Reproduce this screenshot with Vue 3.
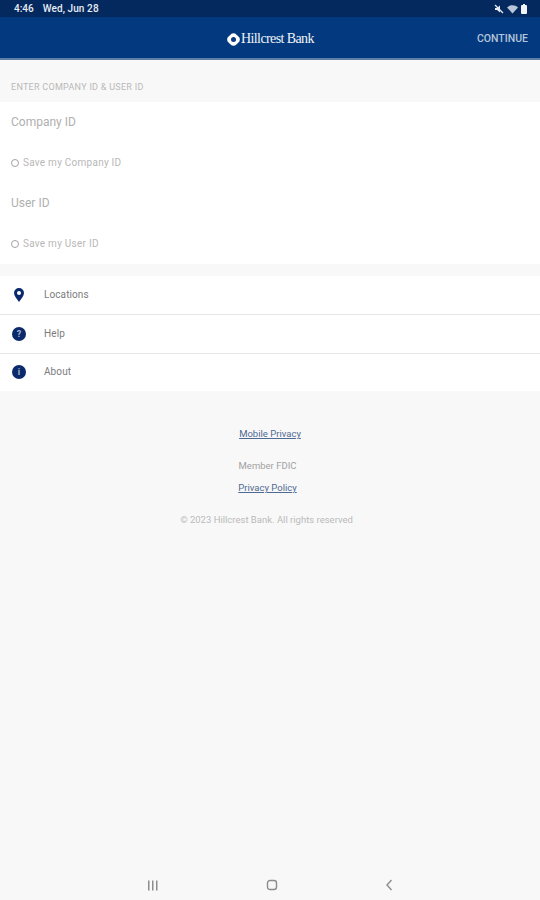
<script setup>
const menuItems = [
  { label: "Locations", icon: "pin" },
  { label: "Help", icon: "help" },
  { label: "About", icon: "info" },
];
</script>

<template>
  <div class="screen">
    <div class="status-bar">
      <span class="status-time">4:46</span>
      <span class="status-date">Wed, Jun 28</span>
      <div class="status-icons">
        <svg width="10" height="10" viewBox="0 0 10 10" fill="#e6ebf3">
          <path d="M1 4h2l3-2.500v7L3 6H1z" />
          <path d="M1 1l8 8" stroke="#e6ebf3" stroke-width="1.200" />
        </svg>
        <svg width="11" height="10" viewBox="0 0 11 10" fill="#b9c5d8">
          <path d="M0 3.500C3 .5 8 .5 11 3.500L5.500 9.500z" />
        </svg>
        <svg width="6" height="10" viewBox="0 0 6 10" fill="#f2f4f8">
          <rect x="0" y="1" width="6" height="9" rx="1" />
          <rect x="2" y="0" width="2" height="1" />
        </svg>
      </div>
    </div>

    <header class="app-bar">
      <div class="logo">
        <svg width="13" height="13" viewBox="0 0 13 13">
          <circle cx="6.500" cy="6.500" r="5.600" fill="#fff" />
          <circle cx="6.500" cy="3.400" r="3.200" fill="#fff" />
          <circle cx="6.500" cy="9.600" r="3.200" fill="#fff" />
          <circle cx="3.400" cy="6.500" r="3.200" fill="#fff" />
          <circle cx="9.600" cy="6.500" r="3.200" fill="#fff" />
          <circle cx="6.500" cy="6.500" r="2.500" fill="#0a3d80" />
        </svg>
        <span class="logo-text">Hillcrest Bank</span>
      </div>
      <span class="continue">CONTINUE</span>
    </header>

    <div class="section-label">ENTER COMPANY ID &amp; USER ID</div>

    <section class="form-card">
      <div class="field">Company ID</div>
      <div class="save-row"><span class="radio"></span>Save my Company ID</div>
      <div class="field">User ID</div>
      <div class="save-row"><span class="radio"></span>Save my User ID</div>
    </section>

    <section class="menu">
      <div v-for="item in menuItems" :key="item.label" class="menu-row">
        <span class="menu-icon">
          <svg v-if="item.icon === 'pin'" width="10" height="14" viewBox="0 0 10 14">
            <path d="M5 0a5 5 0 0 1 5 5c0 3-3 6-5 9-2-3-5-6-5-9a5 5 0 0 1 5-5z" fill="#0b2a6b" />
            <circle cx="5" cy="5" r="2" fill="#fff" />
          </svg>
          <span v-else class="badge">{{ item.icon === "help" ? "?" : "i" }}</span>
        </span>
        <span class="menu-label">{{ item.label }}</span>
      </div>
    </section>

    <footer class="links">
      <a class="link mobile-privacy">Mobile Privacy</a>
      <span class="member">Member FDIC</span>
      <a class="link policy">Privacy Policy</a>
      <span class="copyright">© 2023 Hillcrest Bank. All rights reserved</span>
    </footer>

    <nav class="nav-bar">
      <svg width="12" height="11" viewBox="0 0 12 11" fill="#8d8d8d">
        <rect x="1" y="0.500" width="1.500" height="10" />
        <rect x="5" y="0.500" width="1.500" height="10" />
        <rect x="9" y="0.500" width="1.500" height="10" />
      </svg>
      <svg width="12" height="12" viewBox="0 0 12 12" fill="none" stroke="#8d8d8d" stroke-width="1.400">
        <rect x="1.500" y="1.500" width="9" height="9" rx="2.500" />
      </svg>
      <svg width="8" height="12" viewBox="0 0 8 12" fill="none" stroke="#8d8d8d" stroke-width="1.400">
        <path d="M6.500 1L2 6l4.500 5" />
      </svg>
    </nav>
  </div>
</template>

<style scoped>
.screen {
  width: 540px;
  height: 900px;
  display: flex;
  flex-direction: column;
  background: #f8f8f8;
  font-family: Roboto, "Liberation Sans", sans-serif;
  overflow: hidden;
}

.status-bar {
  height: 17px;
  flex: none;
  display: flex;
  align-items: center;
  padding: 0 13px 0 14px;
  background: #04295f;
  color: #e8ecf3;
  font-size: 10px;
  font-weight: 500;
}

.status-date {
  margin-left: 9px;
  letter-spacing: 0.100px;
}

.status-icons {
  margin-left: auto;
  display: flex;
  align-items: center;
  gap: 3px;
}

.app-bar {
  position: relative;
  height: 41px;
  flex: none;
  display: flex;
  align-items: center;
  justify-content: flex-end;
  padding-right: 12px;
  background: #033a7f;
  border-bottom: 2px solid #5f7fa9;
  box-sizing: content-box;
}

.logo {
  position: absolute;
  left: 227px;
  top: 14px;
  display: flex;
  align-items: center;
  gap: 1px;
}

.logo-text {
  font-family: "Liberation Serif", serif;
  font-size: 14px;
  letter-spacing: -0.600px;
  color: #f1f4f8;
}

.continue {
  margin-top: 2px;
  font-size: 10.500px;
  font-weight: 500;
  color: #b4c4da;
}

.section-label {
  height: 42px;
  flex: none;
  box-sizing: border-box;
  padding: 12px 0 0 11px;
  display: flex;
  align-items: center;
  font-size: 9px;
  letter-spacing: 0.280px;
  color: #b8b8b8;
}

.form-card {
  flex: none;
  height: 162px;
  background: #fff;
  display: flex;
  flex-direction: column;
}

.field {
  height: 40px;
  display: flex;
  align-items: center;
  padding-left: 11px;
  font-size: 12px;
  color: #b0b0b0;
}

.save-row {
  height: 41px;
  display: flex;
  align-items: center;
  gap: 4px;
  padding-left: 11px;
  font-size: 10px;
  letter-spacing: 0.250px;
  color: #b8b8b8;
}

.radio {
  width: 6px;
  height: 6px;
  border: 1px solid #a2a2a2;
  border-radius: 50%;
}

.menu {
  flex: none;
  margin-top: 12px;
  display: flex;
  flex-direction: column;
}

.menu-row {
  height: 38px;
  display: flex;
  align-items: center;
  background: #fff;
  border-bottom: 1px solid #e6e6e6;
}

.menu-row:last-child {
  border-bottom: none;
  height: 37px;
}

.menu-icon {
  width: 14px;
  margin-left: 12px;
  margin-right: 18px;
  display: flex;
  justify-content: center;
  flex: none;
}

.badge {
  width: 14px;
  height: 14px;
  margin-bottom: 1px;
  border-radius: 50%;
  background: #0b2a6b;
  color: #a9b6cf;
  font-size: 9px;
  font-weight: 700;
  display: flex;
  align-items: center;
  justify-content: center;
}

.menu-label {
  margin-bottom: 2px;
  font-size: 10px;
  letter-spacing: 0.100px;
  color: #7c7c7c;
}

.links {
  flex: 1;
  display: flex;
  flex-direction: column;
  align-items: center;
  padding-top: 37px;
  font-size: 9.500px;
  color: #a2a2a2;
}

.link {
  color: #4f6a92;
  text-decoration: underline;
}

.mobile-privacy {
  height: 14px;
}

.member {
  margin-top: 18px;
  margin-left: -5px;
  height: 14px;
}

.policy {
  margin-top: 8px;
  margin-left: -5px;
  height: 14px;
}

.copyright {
  margin-top: 18px;
  margin-left: -7px;
  color: #bababa;
  font-size: 9.500px;
}

.nav-bar {
  height: 30px;
  flex: none;
  display: flex;
  align-items: center;
  justify-content: space-between;
  padding: 0 147px 0 147px;
}
</style>
